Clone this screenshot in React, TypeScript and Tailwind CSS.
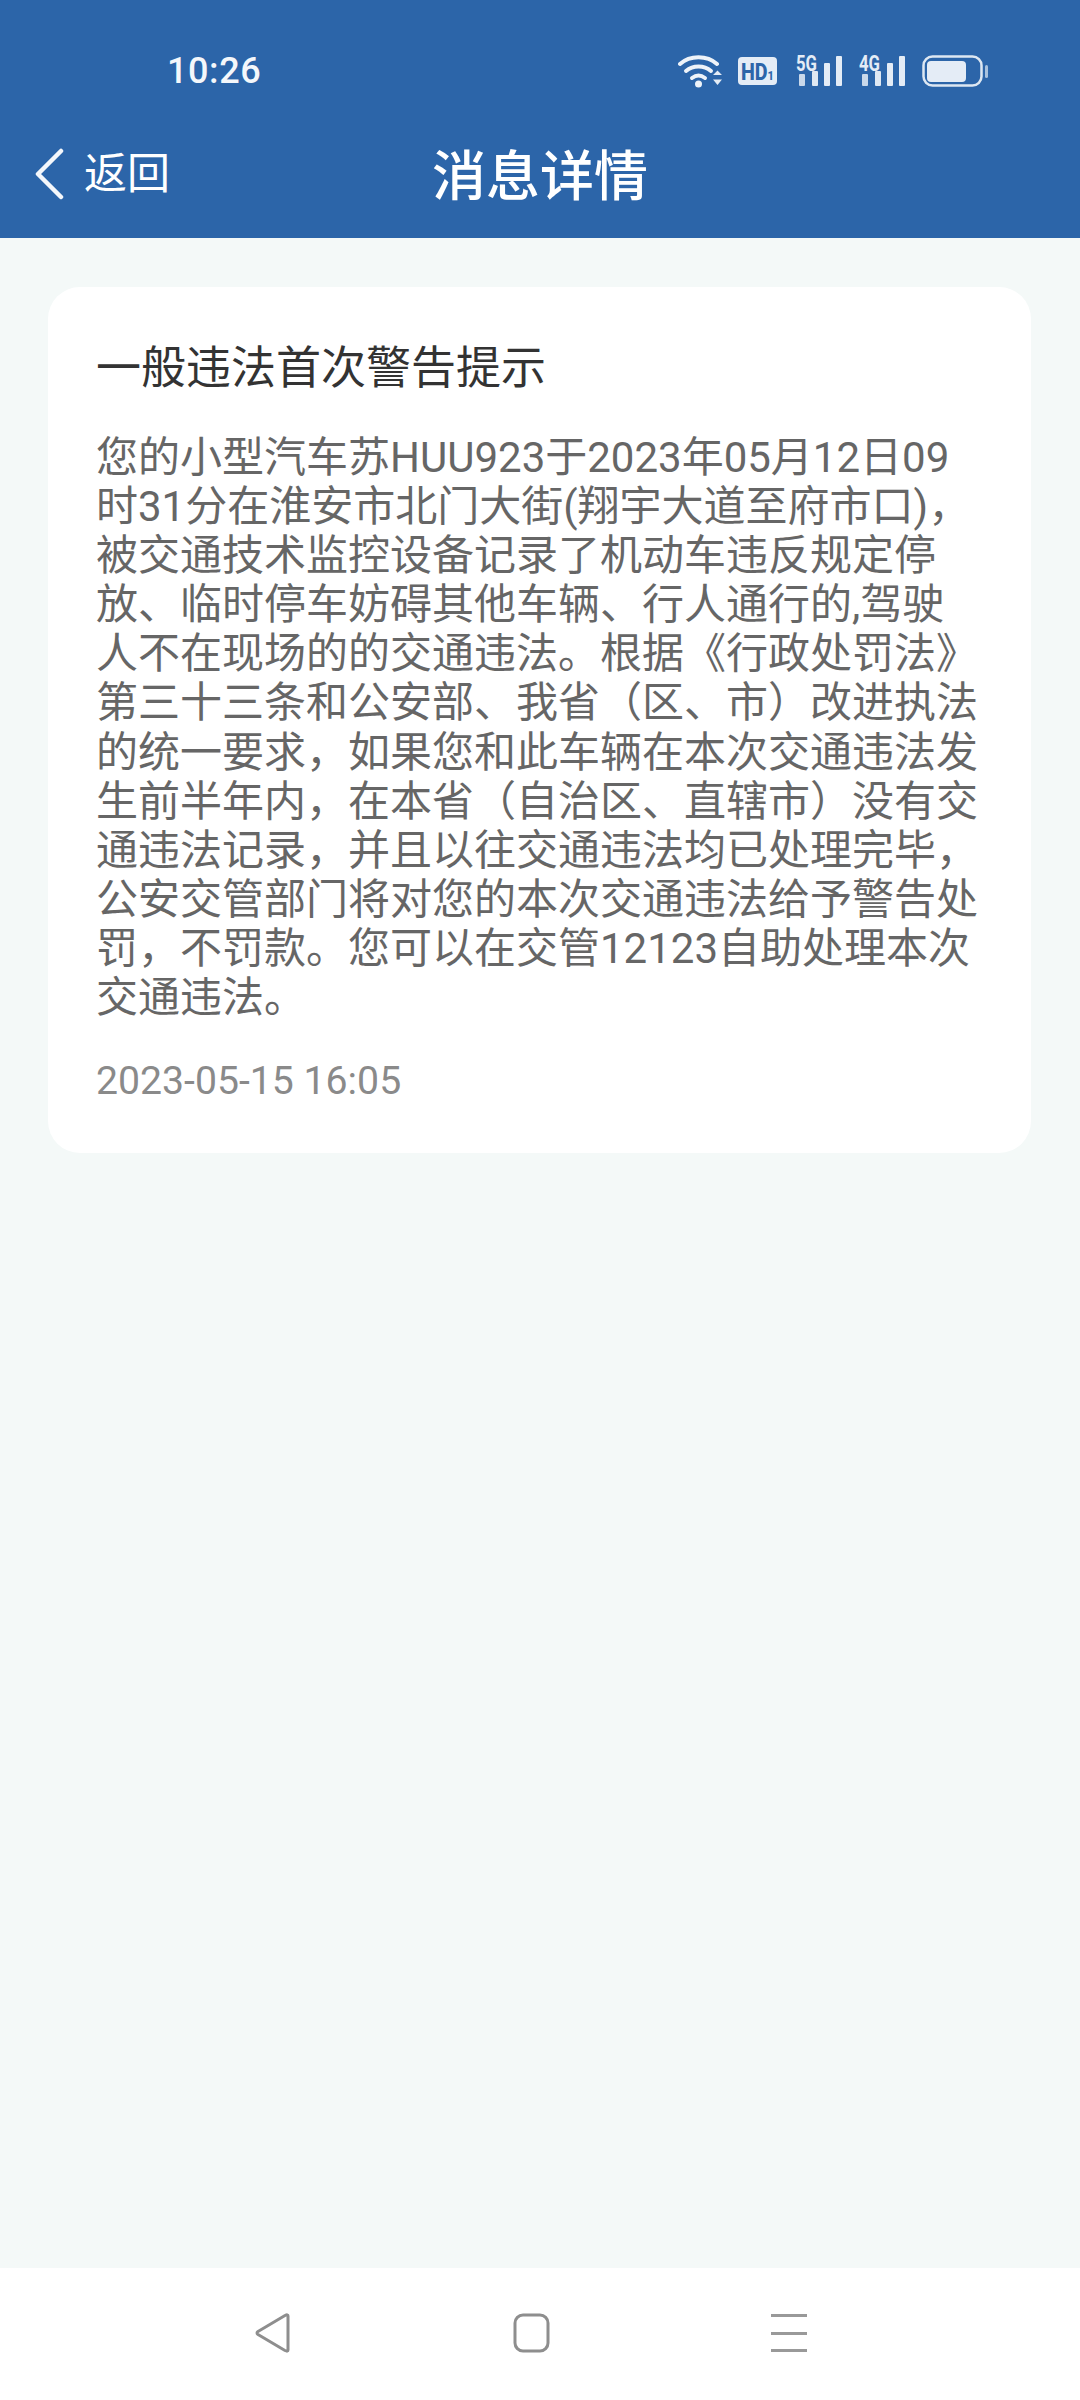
const cjk = { fontFamily: 'Roboto, "Noto Sans CJK SC", sans-serif' };

const lines = [
  "您的小型汽车苏HUU923于2023年05月12日09",
  "时31分在淮安市北门大街(翔宇大道至府市口)，",
  "被交通技术监控设备记录了机动车违反规定停",
  "放、临时停车妨碍其他车辆、行人通行的,驾驶",
  "人不在现场的的交通违法。根据《行政处罚法》",
  "第三十三条和公安部、我省（区、市）改进执法",
  "的统一要求，如果您和此车辆在本次交通违法发",
  "生前半年内，在本省（自治区、直辖市）没有交",
  "通违法记录，并且以往交通违法均已处理完毕，",
  "公安交管部门将对您的本次交通违法给予警告处",
  "罚，不罚款。您可以在交管12123自助处理本次",
  "交通违法。",
];

function Signal({ label }: { label: string }) {
  return (
    <svg width="46" height="44" viewBox="0 0 46 44" className="block">
      <text x="0" y="22" fontSize="22" fontWeight="700" fill="#e4ecf6" fontFamily="Roboto, sans-serif" textLength="21" lengthAdjust="spacingAndGlyphs">{label}</text>
      <rect x="3" y="25" width="6" height="12" rx="1" fill="#c9d8ea" />
      <rect x="16" y="22" width="6" height="15" rx="1" fill="#dfe8f3" />
      <rect x="28" y="14" width="6" height="23" rx="1" fill="#e4ecf6" />
      <rect x="40" y="7" width="6" height="30" rx="1" fill="#e4ecf6" />
    </svg>
  );
}

function StatusIcons() {
  return (
    <div className="flex items-center">
      <svg width="44" height="34" viewBox="0 0 44 34" className="block">
        <g fill="none" stroke="#eef3f9" strokeWidth="4" strokeLinecap="round">
          <path d="M2 10 C12 1 29 1 39 10" />
          <path d="M8 17 C15 11 26 11 33 17" />
          <path d="M14 24 C18 21 23 21 27 24" />
        </g>
        <circle cx="20.5" cy="30" r="3.5" fill="#eef3f9" />
        <path d="M35 21 L39.5 16.5 L44 21 Z M35 25.5 L44 25.5 L39.5 31 Z" fill="#e4ecf6" />
      </svg>
      <svg width="39" height="30" viewBox="0 0 39 30" className="block ml-[16px]">
        <rect x="0" y="1" width="39" height="28" rx="4" fill="#e4ecf6" />
        <text x="3" y="24" fontWeight="800" fill="#2c65a9" fontFamily="Roboto, sans-serif" textLength="33" lengthAdjust="spacingAndGlyphs">
          <tspan fontSize="23">HD</tspan>
          <tspan fontSize="13">1</tspan>
        </text>
      </svg>
      <div className="ml-[19px]"><Signal label="5G" /></div>
      <div className="ml-[17px]"><Signal label="4G" /></div>
      <svg width="66" height="32" viewBox="0 0 66 32" className="block ml-[17px]">
        <rect x="1.5" y="1.5" width="58" height="29" rx="9" fill="none" stroke="#dde7f2" strokeWidth="2.5" />
        <rect x="5" y="6" width="39" height="21" rx="4" fill="#e4ecf6" />
        <rect x="63" y="10" width="3" height="13" rx="1.5" fill="#a9c2de" />
      </svg>
    </div>
  );
}

export default function App() {
  return (
    <div className="flex flex-col h-[2400px] w-[1080px] bg-[#f4f9f8]" style={cjk}>
      <header className="h-[238px] shrink-0 bg-[#2c65a9] text-white flex flex-col">
        <div className="h-[120px] flex items-center justify-between pl-[167px] pr-[92px] pt-[22px]">
          <span className="text-[36px] leading-[44px] font-medium tracking-[0.6px] text-[#f4f7fb]">10:26</span>
          <StatusIcons />
        </div>
        <div className="relative flex-1 flex items-center justify-center pb-[3px]">
          <div className="absolute left-[33px] top-[28px] flex items-center">
            <svg width="32" height="52" viewBox="0 0 32 52" className="block">
              <path d="M28 3 L5 26 L28 49" fill="none" stroke="#f4f7fb" strokeWidth="4.5" strokeLinecap="round" strokeLinejoin="round" />
            </svg>
            <span className="ml-[19px] text-[43px] leading-[52px] text-white">返回</span>
          </div>
          <span className="text-[54px] leading-[64px] font-medium text-white">消息详情</span>
        </div>
      </header>

      <main className="flex-1 px-[48px] pt-[49px]">
        <div className="w-[983px] h-[866px] bg-white rounded-[32px] pl-[48px] pt-[53px]">
          <div className="text-[45px] leading-[58px] text-[#333333] whitespace-nowrap">一般违法首次警告提示</div>
          <div className="mt-[35px] text-[42px] leading-[49.1px] text-[#666666]">
            {lines.map((l) => (
              <div key={l} className="whitespace-nowrap">{l}</div>
            ))}
          </div>
          <div className="mt-[36px] text-[39.2px] leading-[46px] text-[#8a8a8a]">2023-05-15 16:05</div>
        </div>
      </main>

      <nav className="h-[132px] shrink-0 bg-white flex items-center justify-between pl-[254px] pr-[273px] pb-[2px]">
        <svg width="38" height="40" viewBox="0 0 38 40" className="block">
          <path d="M34 3 L34 37 Q34 39 31 37.5 L4 21.5 Q2 20 4 18.5 L31 2.5 Q34 1 34 3 Z" fill="none" stroke="#8e8e8e" strokeWidth="3" strokeLinejoin="round" />
        </svg>
        <svg width="38" height="40" viewBox="0 0 38 40" className="block">
          <rect x="2" y="2" width="33" height="36" rx="8" fill="none" stroke="#8e8e8e" strokeWidth="3" />
        </svg>
        <div className="flex flex-col justify-between w-[36px] h-[38px]">
          <div className="h-[3px] bg-[#999999]" />
          <div className="h-[3px] bg-[#999999]" />
          <div className="h-[3px] bg-[#999999]" />
        </div>
      </nav>
    </div>
  );
}
